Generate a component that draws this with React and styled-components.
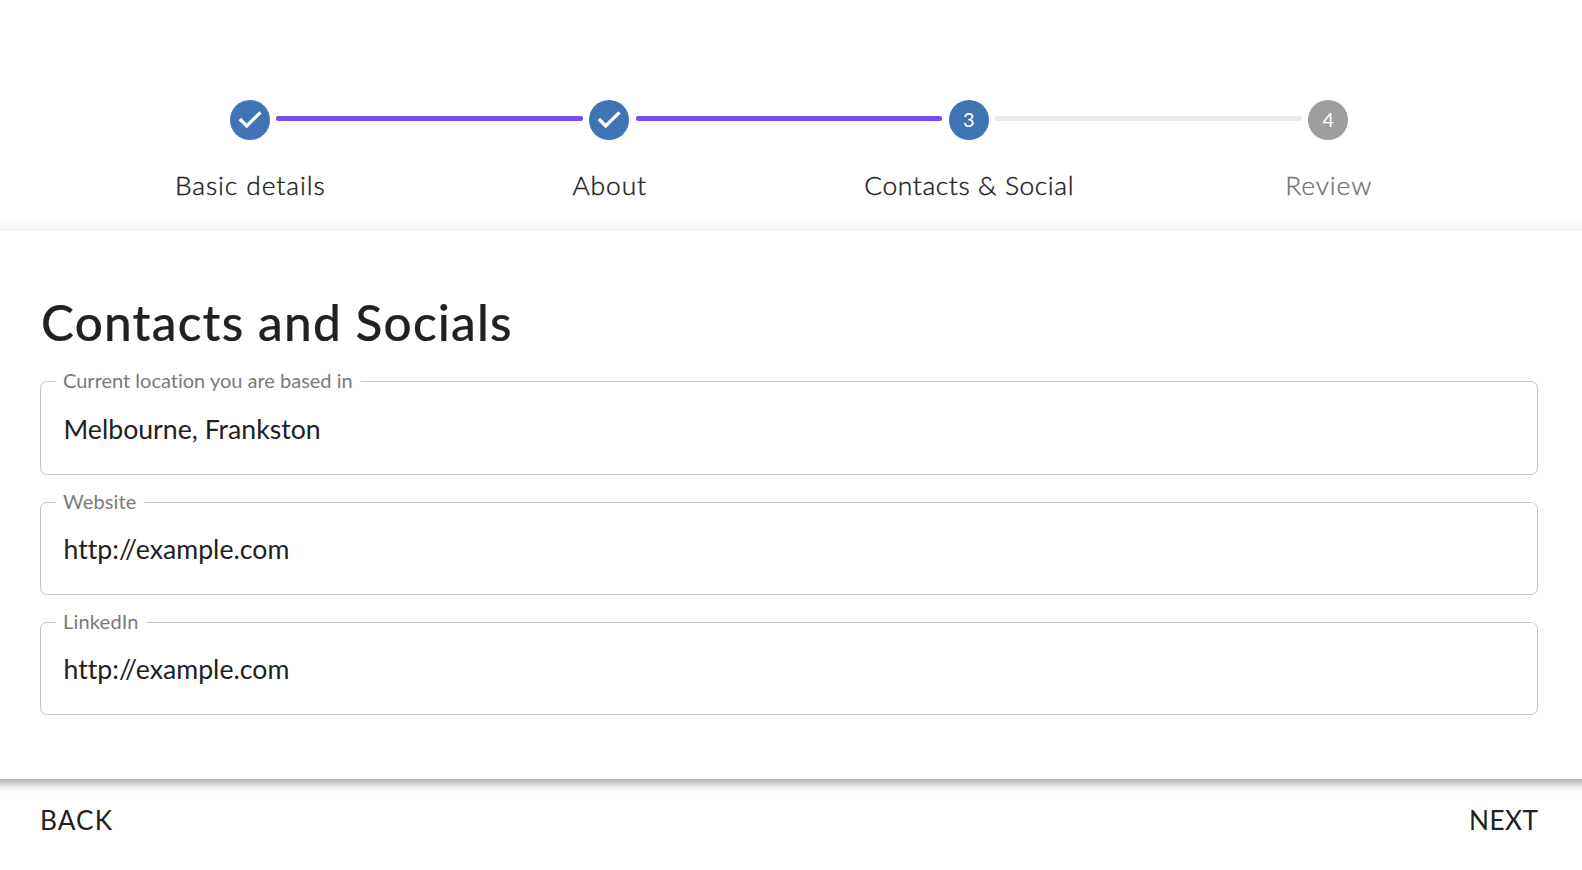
import React from 'react';
import styled, { createGlobalStyle } from 'styled-components';

const Global = createGlobalStyle`
  *, *::before, *::after { box-sizing: border-box; }
  body {
    margin: 0;
    background: #fff;
    color: #212121;
    font-family: Lato, sans-serif;
    font-variant-ligatures: none;
    overflow: hidden;
  }
`;

const Page = styled.div`
  height: 870px;
  display: flex;
  flex-direction: column;
  overflow: hidden;
`;

const Stepper = styled.ol`
  list-style: none;
  margin: 0;
  padding: 100px 74px 0 70px;
  height: 231px;
  display: flex;
`;

const Step = styled.li`
  flex: 1;
  display: flex;
  flex-direction: column;
  align-items: center;
`;

const Track = styled.div`
  align-self: stretch;
  display: grid;
  grid-template-columns: 1fr 40px 1fr;
  column-gap: 6.67px;
`;

const lineColors = { done: '#784af4', todo: '#eaeaf0' };

const Connector = styled.span`
  height: 5px;
  margin-top: 16px;
  margin-right: ${p => (p.$side === 'right' ? '-1px' : 0)};
  border-radius: ${p => (p.$side === 'right' ? '2px 0 0 2px' : '0 2px 2px 0')};
  background: ${p => lineColors[p.$tone] || 'transparent'};
`;

const Badge = styled.span`
  width: 40px;
  height: 40px;
  border-radius: 50%;
  display: flex;
  align-items: center;
  justify-content: center;
  background: ${p => (p.$active ? '#4074b4' : '#9e9e9e')};
  color: #fff;
  font-size: 20px;
  line-height: 38px;
  padding-bottom: ${p => (p.$numbered ? '2px' : 0)};
`;

const StepLabel = styled.span`
  margin-top: 27px;
  padding-left: 1px;
  font-size: 26.4px;
  font-weight: 300;
  line-height: 36px;
  white-space: nowrap;
  letter-spacing: ${p => p.$tracking}px;
  -webkit-text-stroke: 0.4px currentColor;
  color: ${p => (p.$active ? '#212121' : '#757575')};
`;

const Paper = styled.main`
  height: 548px;
  flex: none;
  margin: 0 -20px;
  padding: 61px 64px 0 60px;
  background: #fff;
  box-shadow: 0 3.33px 6.67px -1.67px rgba(0,0,0,.2), 0 6.67px 8.33px rgba(0,0,0,.14), 0 1.67px 16.67px rgba(0,0,0,.12);
`;

const Title = styled.h1`
  margin: 0;
  padding-left: 1px;
  font-size: 49.5px;
  line-height: 60px;
  font-weight: 500;
  letter-spacing: 1.2px;
  -webkit-text-stroke: 0.2px currentColor;
`;

const Fields = styled.div`
  margin-top: 17px;
  display: flex;
  flex-direction: column;
  gap: 15px;
`;

const Input = styled.input`
  display: block;
  width: 100%;
  height: 34px;
  margin: 17px 0 0;
  padding: 0 8.5px;
  border: 0;
  outline: 0;
  background: transparent;
  font: 26.67px/34px Lato, sans-serif;
  font-variant-ligatures: none;
  color: #212121;
`;

const Field = styled.fieldset`
  margin: 0;
  min-width: 0;
  height: 105px;
  padding: 0 23px 0 14px;
  border: 1px solid #c4c4c4;
  border-radius: 6.67px;

  &:first-child { height: 106px; }
  &:first-child ${Input} { margin-top: 18px; }
`;

const FieldName = styled.legend`
  padding: 0 8px 2px 8px;
  font-size: 20px;
  line-height: 23px;
  letter-spacing: ${p => p.$tracking}px;
  color: #7a7a7a;
`;

const Actions = styled.footer`
  display: flex;
  justify-content: space-between;
  padding: 24px 44px 0 40px;
`;

const Action = styled.button`
  padding: 0;
  border: 0;
  background: none;
  font: 26.2px/34px Lato, sans-serif;
  color: #212121;
  letter-spacing: ${p => p.$tracking}px;
  margin-right: ${p => -p.$tracking}px;
`;

const Check = () => (
  <svg width="40" height="40" viewBox="0 0 24 24" fill="none" aria-hidden="true">
    <path d="M5.9 11.4 10 15.6 18.3 7.4" stroke="#fff" strokeWidth="2" />
  </svg>
);

const steps = [
  { name: 'Basic details', state: 'done', tracking: 0.9, right: 'done' },
  { name: 'About', state: 'done', tracking: 0.9, left: 'done', right: 'done' },
  { name: 'Contacts & Social', state: 'active', tracking: 0.6, left: 'done', right: 'todo' },
  { name: 'Review', state: 'todo', tracking: 0.9, left: 'todo' },
];

const fields = [
  { name: 'Current location you are based in', value: 'Melbourne, Frankston', tracking: 0 },
  { name: 'Website', value: 'http://example.com', tracking: 0.15 },
  { name: 'LinkedIn', value: 'http://example.com', tracking: 0.2 },
];

export default function App() {
  return (
    <Page>
      <Global />
      <Stepper>
        {steps.map((s, i) => (
          <Step key={s.name}>
            <Track>
              <Connector $side="left" $tone={s.left} />
              <Badge $active={s.state !== 'todo'} $numbered={s.state !== 'done'}>
                {s.state === 'done' ? <Check /> : i + 1}
              </Badge>
              <Connector $side="right" $tone={s.right} />
            </Track>
            <StepLabel $active={s.state !== 'todo'} $tracking={s.tracking}>{s.name}</StepLabel>
          </Step>
        ))}
      </Stepper>
      <Paper>
        <Title>Contacts and Socials</Title>
        <Fields>
          {fields.map(f => (
            <Field key={f.name}>
              <FieldName $tracking={f.tracking}>{f.name}</FieldName>
              <Input aria-label={f.name} defaultValue={f.value} />
            </Field>
          ))}
        </Fields>
      </Paper>
      <Actions>
        <Action $tracking={1.1}>BACK</Action>
        <Action $tracking={0.5}>NEXT</Action>
      </Actions>
    </Page>
  );
}
